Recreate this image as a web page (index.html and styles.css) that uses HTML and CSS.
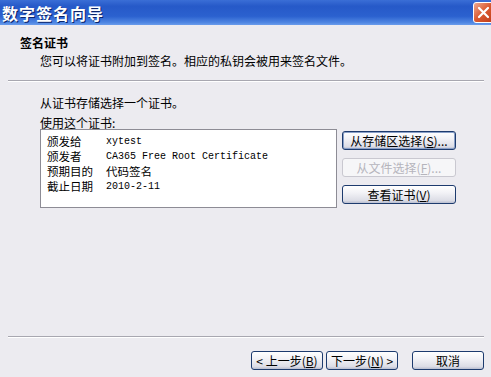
FILE: index.html
```html
<!DOCTYPE html>
<html lang="zh-CN">
<head>
<meta charset="UTF-8">
<title>数字签名向导</title>
<link rel="stylesheet" href="styles.css">
</head>
<body>
    <div class="window">
        <div class="titlebar">
            <span class="title">数字签名向导</span>
            <span class="close">
                <svg width="13" height="13" viewBox="0 0 13 13"><path d="M2 2 L11 11 M11 2 L2 11" stroke="#fff" stroke-width="2.2" stroke-linecap="round"/></svg>
            </span>
        </div>
        <div class="header">
            <div class="header-title">签名证书</div>
            <div class="header-desc">您可以将证书附加到签名。相应的私钥会被用来签名文件。</div>
        </div>
        <div class="sep"></div>
        <div class="content">
            <div class="intro">从证书存储选择一个证书。</div>
            <div class="label">使用这个证书:</div>
            <div class="cert-row">
                <div class="cert-box">
                    <span class="k">颁发给</span><span class="v">xytest</span>
                    <span class="k">颁发者</span><span class="v">CA365 Free Root Certificate</span>
                    <span class="k">预期目的</span><span class="v cjk">代码签名</span>
                    <span class="k">截止日期</span><span class="v">2010-2-11</span>
                </div>
                <div class="side-buttons">
                    <button class="btn focused">从存储区选择(<u>S</u>)...</button>
                    <button class="btn" disabled>从文件选择(<u>F</u>)...</button>
                    <button class="btn">查看证书(<u>V</u>)</button>
                </div>
            </div>
        </div>
        <div class="sep bottom"></div>
        <div class="footer">
            <button class="btn nav">&lt; 上一步(<u>B</u>)</button>
            <button class="btn nav">下一步(<u>N</u>) &gt;</button>
            <button class="btn nav cancel">取消</button>
        </div>
    </div>
</body>
</html>
```

FILE: styles.css
```css
body {
    margin: 0;
    padding: 0;
    font-family: "Noto Sans CJK SC", "DejaVu Sans", sans-serif;
    font-size: 12px;
    color: #000;
}
.window {
    width: 491px;
    height: 377px;
    background: #ecebf0;
    overflow: hidden;
    display: flex;
    flex-direction: column;
}
.titlebar {
    height: 25px;
    background: linear-gradient(180deg, #3a6ed6 0%, #2659c8 25%, #2b61cf 65%, #4f86e2 90%, #6a9cec 100%);
    display: flex;
    align-items: center;
    justify-content: space-between;
    overflow: hidden;
}
.title {
    color: #fff;
    font-weight: bold;
    font-size: 16px;
    padding-left: 2px;
    letter-spacing: 1px;
    text-shadow: 1px 1px 0 #0a246a;
}
.close {
    width: 21px;
    height: 21px;
    margin-right: -3px;
    box-sizing: border-box;
    border: 1px solid #fff;
    border-radius: 3px;
    background: linear-gradient(135deg, #eeaa92, #d9582f 50%, #bf3d1b);
    display: flex;
    align-items: center;
    justify-content: center;
}
.header {
    padding: 10px 0 0 20px;
    height: 45px;
}
.header-title {
    font-weight: bold;
    line-height: 16px;
}
.header-desc {
    padding-left: 20px;
    margin-top: 2px;
    line-height: 16px;
}
.sep {
    margin: 0 7px 0 8px;
    border-top: 1px solid #a8a7b0;
    border-bottom: 1px solid #fff;
}
.content {
    padding: 13px 0 0 40px;
    height: 241px;
}
.intro {
    line-height: 16px;
}
.label {
    margin-top: 5px;
    line-height: 14px;
}
.cert-row {
    display: flex;
    gap: 5px;
    margin-top: -1px;
}
.cert-box {
    width: 297px;
    height: 79px;
    box-sizing: border-box;
    background: #fff;
    border: 1px solid #8d8c95;
    padding: 4px 0 0 6px;
    display: grid;
    grid-template-columns: 59px auto;
    grid-auto-rows: 15px;
    align-content: start;
}
.k {
    font-size: 11.5px;
    line-height: 15px;
}
.v {
    font-family: "Liberation Mono", monospace;
    font-size: 10px;
    line-height: 15px;
    white-space: nowrap;
}
.v.cjk {
    font-family: "Noto Sans CJK SC", sans-serif;
    font-size: 11.5px;
}
.side-buttons {
    display: flex;
    flex-direction: column;
    gap: 8px;
    padding-top: 2px;
}
.btn {
    width: 114px;
    height: 19px;
    padding: 0;
    font-family: "Noto Sans CJK SC", sans-serif;
    font-size: 12px;
    line-height: 15px;
    color: #000;
    border: 1px solid #1d3b6e;
    border-radius: 3px;
    background: linear-gradient(180deg, #ffffff 0%, #f2f2f6 40%, #dcdde6 85%, #b9bed0 100%);
}
.btn.focused {
    box-shadow: inset 0 0 0 1px #8aa0c8;
}
.btn:disabled {
    color: #b5b4bc;
    border-color: #c9c8d0;
    background: #f6f6f8;
}
.btn u {
    text-decoration: underline;
}
.footer {
    display: flex;
    padding: 13px 0 0 251px;
    gap: 3px;
}
.btn.nav {
    width: 72px;
}
.btn.nav.cancel {
    margin-left: 11px;
}
```
